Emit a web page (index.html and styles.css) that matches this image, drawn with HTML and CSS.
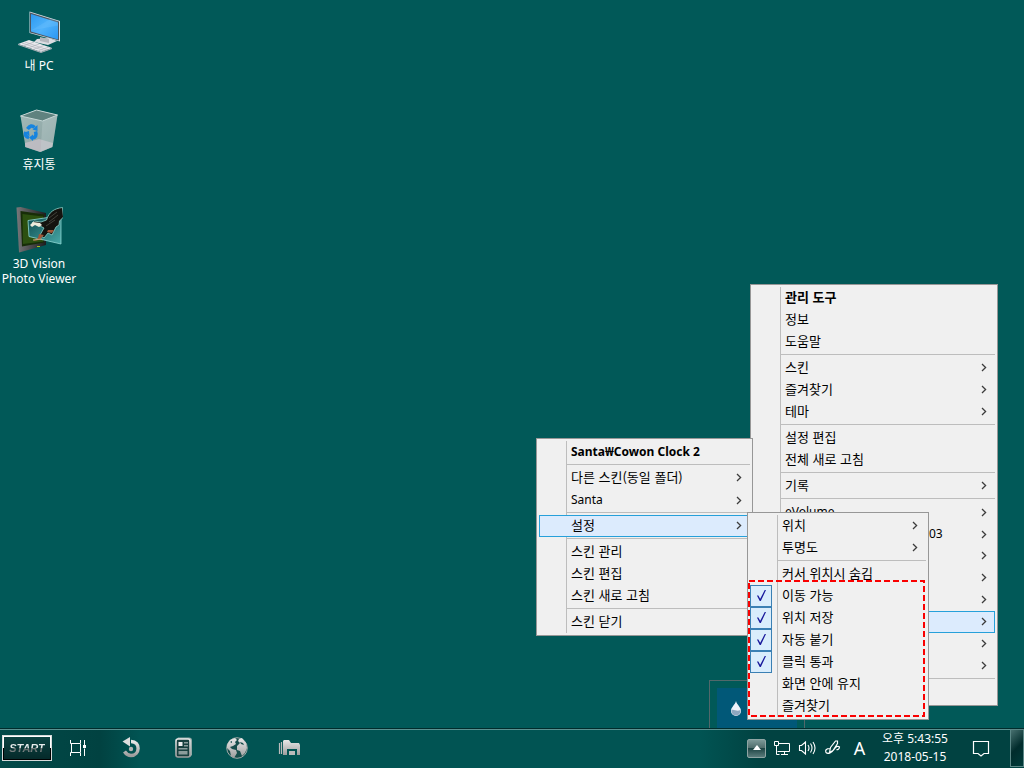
FILE: index.html
```
<!DOCTYPE html>
<html lang="ko">
<head>
<meta charset="utf-8">
<title>바탕 화면</title>
<link rel="stylesheet" href="styles.css">
</head>
<body>
<svg class="defs" aria-hidden="true">
  <defs>
    <symbol id="arrow" viewBox="0 0 6 9"><path d="M1 1l3.600 3.500L1 8" fill="none" stroke="#3c3c3c" stroke-width="1.300"/></symbol>
    <symbol id="tick" viewBox="0 0 22 22"><path d="M6.500 10.500h1.600l2 3.500 5-9.500h1.400l-5.700 12h-1.200z" fill="#1a1a9c"/></symbol>
    <linearGradient id="metal" x1="0" y1="0" x2="0" y2="1"><stop offset="0" stop-color="#e8e8e8"/><stop offset="1" stop-color="#9d9d9d"/></linearGradient>
    <linearGradient id="screen" x1="0" y1="0" x2="1" y2="1"><stop offset="0" stop-color="#2c9af0"/><stop offset=".5" stop-color="#4fb2fb"/><stop offset="1" stop-color="#2b96f3"/></linearGradient>
    <linearGradient id="glass" x1="0" y1="0" x2="1" y2="1"><stop offset="0" stop-color="#a4bbb9"/><stop offset="1" stop-color="#849d9c"/></linearGradient>
    <linearGradient id="photo" x1="0" y1="0" x2="1" y2="1"><stop offset="0" stop-color="#0c4a4e"/><stop offset="1" stop-color="#48a9a8"/></linearGradient>
    <linearGradient id="frame" x1="0" y1="0" x2="1" y2="0"><stop offset="0" stop-color="#77777a"/><stop offset="1" stop-color="#1c1c1d"/></linearGradient>
  </defs>
</svg>
<main class="desktop">
  <nav class="shortcuts">
    <a class="shortcut" href="#pc">
      <svg width="48" height="48" viewBox="0 0 48 48" aria-hidden="true">
        <path d="M22 31l12-1 8 3-9 4-14-3z" fill="#dcdde2"/><path d="M25 29l9 2v4l-9-2z" fill="#b4b7bd"/>
        <path d="M14.500 3.500L45 13v20.500L14.500 25z" fill="#d6dde3"/><path d="M15 4.500l29 9v19L15 24.500z" fill="#4c5660"/><path d="M16 6l27 8.500v17L16 23.500z" fill="url(#screen)"/><path d="M16 22.500l20-12 7 3v4z" fill="#7cc8ff" opacity=".25"/>
        <path d="M3 36l11-4 23 8-11 4z" fill="#e8e8ec"/><path d="M3 36l23 8 11-4v1l-11 4-23-8z" fill="#aab0b7"/>
        <path d="M7 35l23 8M10 34l23 8M8 38l11-4M13 40l11-4M18 41.500l11-4M23 43l11-4" stroke="#a9adb5" stroke-width=".6"/>
      </svg>
      <span>내 PC</span>
    </a>
    <a class="shortcut" href="#bin">
      <svg width="48" height="48" viewBox="0 0 48 48" aria-hidden="true">
        <path d="M5.500 9l16-6 21 5-5 32-12 5-15-5z" fill="url(#glass)"/>
        <path d="M5.500 9l16-6 21 5-15 6z" fill="#5f827f" stroke="#c5d6d5" stroke-width="1"/>
        <path d="M10 36l14-4 14 4-1 4-12 5-15-5z" fill="#cbc2c9" opacity=".75"/>
        <path d="M27.500 14l15-6-5 32-12 5z" fill="#c7d6d6" opacity=".3"/>
        <g fill="none" stroke="#1684df" stroke-width="3.600"><path d="M12.500 22q3.500-5 7-1.500"/><path d="M20.500 24.500q2 6-3.500 6.500"/><path d="M14 30.500q-5-1-3-5.500"/></g>
        <g fill="#1684df"><path d="M22.500 18v6l-5-1.500zM18 27.500v6.500l-4-3.500zM9 25.500l5-1.500.5 5z"/></g>
      </svg>
      <span>휴지통</span>
    </a>
    <a class="shortcut" href="#viewer">
      <svg width="48" height="48" viewBox="0 0 48 48" aria-hidden="true">
        <path d="M1.500 1.500l4-.5L31 7v32L6 46l-2 .5z" fill="url(#frame)"/>
        <path d="M5.500 5L29 8.500v28L7 40.500z" fill="#172d08"/><path d="M7.500 8L28 10.500v25L8 38z" fill="#2c5010"/>
        <path d="M13 14.500l33-5V38l-32-7.500z" fill="url(#photo)" stroke="#91d8d4" stroke-width=".8"/>
        <path d="M47.500 1.500C39 2.500 34 6 31.500 14L26 16l-7-1-2 2 8 3 4 2-4 7 4 3 4-5 4 2 4-8 3-2 .5-4 4-4-.5-4z" fill="#14130f" stroke="#8ed0c8" stroke-width=".8"/>
        <path d="M15 19l3-3 7 1 2 2-3 2-4-2-3 2z" fill="#ecebdc"/><path d="M24 28l5 1-5 5-6 1 5-3zM33 24l6 0-2 3-5-1z" fill="#a25738"/><path d="M18 34l9-1" stroke="#bda47a"/><path d="M34 12l8-6M34 16l9-7M31 20l9-6" stroke="#4c4d45" stroke-width=".8"/><path d="M22 40.500h3" stroke="#aabd18"/>
      </svg>
      <span>3D Vision<br>Photo Viewer</span>
    </a>
  </nav>

  <div class="tray-popup"><svg width="16" height="18" viewBox="0 0 16 18" aria-hidden="true"><path d="M8 1c1 4 5 6 5 10a5 5 0 0 1-10 0c0-4 4-6 5-10z" fill="#eef2fa"/><path d="M3.500 10c3-1 5 2 9 0 0 4-2 5.500-4.500 5.500S3.500 14 3.500 10z" fill="#8ea6bf"/></svg></div>

  <ul class="menu menu-main" role="menu">
    <li><button class="strong">관리 도구</button></li>
    <li><button>정보</button></li>
    <li><button>도움말</button></li>
    <li class="rule"></li>
    <li><button>스킨<svg class="arrow"><use href="#arrow"/></svg></button></li>
    <li><button>즐겨찾기<svg class="arrow"><use href="#arrow"/></svg></button></li>
    <li><button>테마<svg class="arrow"><use href="#arrow"/></svg></button></li>
    <li class="rule"></li>
    <li><button>설정 편집</button></li>
    <li><button>전체 새로 고침</button></li>
    <li class="rule"></li>
    <li><button>기록<svg class="arrow"><use href="#arrow"/></svg></button></li>
    <li class="rule"></li>
    <li><button class="latin">eVolume<svg class="arrow"><use href="#arrow"/></svg></button></li>
    <li><button class="latin"><span class="tail">03</span><svg class="arrow"><use href="#arrow"/></svg></button></li>
    <li><button aria-label="스킨 3"><svg class="arrow"><use href="#arrow"/></svg></button></li>
    <li><button aria-label="스킨 4"><svg class="arrow"><use href="#arrow"/></svg></button></li>
    <li><button aria-label="스킨 5"><svg class="arrow"><use href="#arrow"/></svg></button></li>
    <li><button class="active" aria-label="Santa"><svg class="arrow"><use href="#arrow"/></svg></button></li>
    <li><button aria-label="스킨 7"><svg class="arrow"><use href="#arrow"/></svg></button></li>
    <li><button aria-label="스킨 8"><svg class="arrow"><use href="#arrow"/></svg></button></li>
    <li class="rule"></li>
    <li><button aria-label="종료"></button></li>
  </ul>

  <ul class="menu menu-skin" role="menu">
    <li><button class="strong latin">Santa₩Cowon Clock 2</button></li>
    <li class="rule"></li>
    <li><button>다른 스킨(동일 폴더)<svg class="arrow"><use href="#arrow"/></svg></button></li>
    <li><button class="latin">Santa<svg class="arrow"><use href="#arrow"/></svg></button></li>
    <li class="rule"></li>
    <li><button class="active">설정<svg class="arrow"><use href="#arrow"/></svg></button></li>
    <li class="rule"></li>
    <li><button>스킨 관리</button></li>
    <li><button>스킨 편집</button></li>
    <li><button>스킨 새로 고침</button></li>
    <li class="rule"></li>
    <li><button>스킨 닫기</button></li>
  </ul>

  <ul class="menu menu-settings" role="menu">
    <li><button>위치<svg class="arrow"><use href="#arrow"/></svg></button></li>
    <li><button>투명도<svg class="arrow"><use href="#arrow"/></svg></button></li>
    <li class="rule"></li>
    <li><button>커서 위치시 숨김</button></li>
    <li class="checked"><svg class="tick"><use href="#tick"/></svg><button>이동 가능</button></li>
    <li class="checked"><svg class="tick"><use href="#tick"/></svg><button>위치 저장</button></li>
    <li class="checked"><svg class="tick"><use href="#tick"/></svg><button>자동 붙기</button></li>
    <li class="checked"><svg class="tick"><use href="#tick"/></svg><button>클릭 통과</button></li>
    <li><button>화면 안에 유지</button></li>
    <li><button>즐겨찾기</button></li>
    <li class="highlight" aria-hidden="true"><svg width="100%" height="100%"><rect x="1" y="1" width="175" height="135" fill="none" stroke="#fa0000" stroke-width="2" stroke-dasharray="6 3"/></svg></li>
  </ul>
</main>

<footer class="taskbar">
  <button class="start"><span>START</span></button>
  <div class="launchers">
    <button aria-label="작업 보기"><svg width="24" height="24" viewBox="0 0 24 24" fill="none" stroke="#fff" stroke-width="1"><path d="M4.500 4v3.500h10V4M4.500 20v-3.500h10V20M5.500 8v8M14.500 8v8M18.500 4v5M18.500 12.500V20"/><path d="M17 9h3v3h-3z" fill="#fff" stroke="none"/></svg></button>
    <button aria-label="새로 고침"><svg width="24" height="24" viewBox="0 0 24 24"><path d="M12 5.500c10 0 9 14 0 14q-4 0-6.500-4" fill="none" stroke="url(#metal)" stroke-width="3.400"/><path d="M3.500 5.500L11 1v9.500z" fill="#dedede"/><circle cx="12" cy="13" r="2.200" fill="#b5b5b5"/></svg></button>
    <button aria-label="뉴스"><svg width="24" height="24" viewBox="0 0 24 24"><path d="M6 1.500h11q3 0 3 3V19l-2 2V5q0-2-2-2H5z" fill="#92a9a7"/><rect x="4" y="3" width="14" height="18" rx="2" fill="#183f3e" stroke="url(#metal)" stroke-width="1.600"/><path d="M6.500 6h4v4h-4z" fill="#eee"/><path d="M12 6h4v1.500h-4zM12 9h4v1.500h-4zM6.500 12h9v1.500h-9zM6.500 15h9v3.500h-9z" fill="#8b9c9b"/></svg></button>
    <button aria-label="브라우저"><svg width="24" height="24" viewBox="0 0 24 24"><circle cx="12" cy="12" r="10.300" fill="#174d4b" stroke="#a0aaa9" stroke-width="1"/><path d="M2 9l3-5 5-2 2 2-2 2 1 2-3 2-3 1 2 2 4 1 1 3-3 5-3-2-1-5-3-3zM14 3l3-1 4 5 1 5-2 5-3 3-2-5-3-1v-4l3-3-2-2z" fill="url(#metal)"/><path d="M15 6l3 1 1 2-3-1zM5 6l2-1v2z" fill="#174d4b"/></svg></button>
    <button aria-label="파일 탐색기"><svg width="24" height="24" viewBox="0 0 24 24"><path d="M1.500 7v11M3.500 6v12" stroke="#bbb" stroke-width="1.200"/><path d="M5 5l1-1h5l2 3h8l1 2v10h-3v-6H9v6H5z" fill="url(#metal)"/><path d="M11 15h6v4h-6z" fill="#bbb"/></svg></button>
  </div>
  <div class="tray">
    <button class="overflow" aria-label="숨겨진 아이콘"><svg width="10" height="6" viewBox="0 0 10 6"><path d="M5 0l4 5H1z" fill="#fff"/></svg></button>
    <button aria-label="네트워크"><svg width="18" height="18" viewBox="0 0 18 18" fill="none" stroke="#fff" stroke-width="1"><path d="M5.500 4.500h11v8h-12M11.500 12.500v3M8 15.500h7M1.500 2.500h4v4h-4zM3.500 6.500v9h3"/></svg></button>
    <button aria-label="볼륨"><svg width="18" height="18" viewBox="0 0 18 18" fill="none" stroke="#fff" stroke-width="1.100"><path d="M1.500 6.500h2l4-3.500v12l-4-3.500h-2zM10 6q2 3 0 6M12.500 4.500q3 4.500 0 9M15 3q4 6 0 12"/></svg></button>
    <button class="pen" aria-label="펜"><svg width="18" height="18" viewBox="0 0 18 18" fill="none" stroke="#fff" stroke-width="1.200"><path d="M5.500 13.500l1-5 5-6.500h2v2.500l-4.500 7zM6 9.500c-4 0-5 2-4 4 2 2 6 0 8-3s4-4 5.500-2.500c0 2-2 3-3 2.500"/></svg></button>
    <button class="ime" aria-label="입력기">A</button>
    <button class="clock"><time datetime="2018-05-15T17:43:55">오후 5:43:55<br>2018-05-15</time></button>
    <button class="notice" aria-label="알림"><svg width="18" height="18" viewBox="0 0 18 18" fill="none" stroke="#fff" stroke-width="1.200"><path d="M1.500 2.500h15v12H12L9 17l-3-2.500H1.500z"/></svg></button>
    <button class="peek" aria-label="바탕 화면 보기"></button>
  </div>
</footer>
</body>
</html>
```
FILE: styles.css
```
* { box-sizing: border-box; }
html, body { height: 100%; margin: 0; }
body {
  display: flex;
  flex-direction: column;
  overflow: hidden;
  background: #015958;
  font: 13px/20px "Noto Sans CJK KR", "Noto Sans", sans-serif;
}
button {
  margin: 0;
  padding: 0;
  border: 0;
  background: none;
  color: inherit;
  font: inherit;
}
svg { display: block; flex: none; }
.defs { position: absolute; width: 0; height: 0; }

.desktop { position: relative; flex: 1; min-height: 0; }
.shortcuts { display: flex; flex-direction: column; width: 78px; gap: 27px; padding-top: 8px; }
.shortcut {
  display: flex;
  flex-direction: column;
  align-items: center;
  gap: 2px;
  min-height: 72px;
  color: #fff;
  font: 12px/15px "Noto Sans", "Noto Sans CJK KR", sans-serif;
  text-align: center;
  text-decoration: none;
  white-space: nowrap;
}

.tray-popup {
  position: absolute;
  right: 219px;
  bottom: 0;
  display: flex;
  align-items: center;
  width: 96px;
  height: 48px;
  padding-left: 18px;
  border: 1px solid #52686a;
  border-bottom: 0;
  background: linear-gradient(#015878, #015878) 7px 7px / 80px 41px no-repeat;
}
.tray-popup svg { margin-top: 8px; }

.menu {
  position: absolute;
  margin: 0;
  padding: 2px;
  border: 1px solid #979797;
  background: linear-gradient(#bdbdbd, #bdbdbd) 29px 2px / 1px calc(100% - 4px) no-repeat #f0f0f0;
  color: #000;
  list-style: none;
}
.menu-main { right: 26px; bottom: 22px; width: 248px; }
.menu-skin { right: 271px; bottom: 92px; width: 217px; }
.menu-settings { right: 95px; bottom: 8px; width: 182px; }
.menu button {
  display: flex;
  align-items: center;
  width: 100%;
  height: 22px;
  padding: 0 7px 2px 31px;
  border: 1px solid transparent;
  text-align: left;
  white-space: nowrap;
}
.menu .tail { margin-left: 144px; }
.menu button.active { border-color: #26a0da; background: #dcebfd; }
.menu button.strong { font-weight: 700; }
.menu button.latin { padding-bottom: 0; font-family: "Noto Sans", "Noto Sans CJK KR", sans-serif; font-size: 12px; }
.rule { display: flex; height: 4px; margin-left: 28px; padding-top: 1px; }
.rule::after { content: ""; flex: 1; height: 1px; background: #bdbdbd; }
.arrow { width: 6px; height: 9px; margin-left: auto; }
.checked { display: flex; }
.checked button { padding-left: 9px; }
.tick { width: 22px; height: 22px; border: 1px solid #3a80b4; background: #d9edfc; }
.highlight { position: absolute; left: 0; bottom: 2px; width: 177px; height: 137px; pointer-events: none; }

.taskbar {
  display: flex;
  align-items: center;
  height: 40px;
  padding-bottom: 1px;
  border-top: 1px solid #012c2c;
  box-shadow: inset 0 1px #5b9291;
  background: linear-gradient(90deg, #014a49 0, #014241 100px, #015453 140px, #015453 700px, #014241 760px, #014241 100%);
  color: #fff;
}
.start {
  width: 48px;
  height: 24px;
  margin: 0 15px 0 3px;
  border: 1px solid;
  border-image: linear-gradient(#fff 50%, #000 50%) 1;
  outline: 1px solid #d5dada;
  background: linear-gradient(#0b4342, #052a2a);
  font: italic 700 11px/20px "Liberation Sans", sans-serif;
}
.start span {
  background: linear-gradient(#e8ecec 50%, #5b6464 55%, #8d9595);
  background-clip: text;
  color: transparent;
}
.launchers { display: flex; gap: 29px; }
.tray { display: flex; align-items: center; height: 100%; margin-left: auto; }
.tray > button { display: flex; align-items: center; justify-content: center; width: 25px; height: 100%; }
.tray > .overflow { width: 19px; height: 19px; margin-right: 3px; border: 1px solid #8fa5a4; border-radius: 2px; background: linear-gradient(#7c9897, #4c6a69 50%, #1e4545 50%, #5a7c7b); }
.tray > .pen { width: 28px; }
.tray > .ime { font: 18px/24px "Noto Sans", sans-serif; }
.tray > .clock { width: 86px; font: 12px/18px "Noto Sans", "Noto Sans CJK KR", sans-serif; text-align: center; }
.tray > .notice { width: 46px; }
.tray > .peek { width: 14px; margin-left: 6px; border: 1px solid #5b8786; background: linear-gradient(135deg, #47706f, #012c2c 50%, #013b3a); }
```
